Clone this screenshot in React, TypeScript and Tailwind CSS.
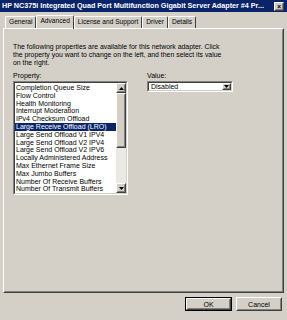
const items = [
  "Completion Queue Size",
  "Flow Control",
  "Health Monitoring",
  "Interrupt Moderation",
  "IPv4 Checksum Offload",
  "Large Receive Offload (LRO)",
  "Large Send Offload V1 IPV4",
  "Large Send Offload V2 IPV4",
  "Large Send Offload V2 IPV6",
  "Locally Administered Address",
  "Max Ethernet Frame Size",
  "Max Jumbo Buffers",
  "Number Of Receive Buffers",
  "Number Of Transmit Buffers",
];

const tabs = ["General", "Advanced", "License and Support", "Driver", "Details"];

function Arrow({ up }: { up?: boolean }) {
  return (
    <svg width="5" height="3" viewBox="0 0 5 3">
      <path d={up ? "M2.5 0 L5 3 L0 3 Z" : "M0 0 L5 0 L2.5 3 Z"} fill="#000" />
    </svg>
  );
}

function RaisedBox({ className, children }: { className?: string; children?: React.ReactNode }) {
  return (
    <div className={`border border-t-white border-l-white border-r-[#404040] border-b-[#404040] bg-[#d4d0c8] ${className ?? ""}`}>
      <div className="flex h-full w-full items-center justify-center border border-t-[#d4d0c8] border-l-[#d4d0c8] border-r-[#808080] border-b-[#808080]">
        {children}
      </div>
    </div>
  );
}

export default function App() {
  return (
    <div className="relative h-[320px] w-[287px] overflow-hidden bg-[#d4d0c8] font-['Liberation_Sans',Arial,sans-serif] text-black">
      {/* title bar */}
      <div className="flex h-[12px] items-center justify-between bg-[#0a246a] pl-[2px] pr-[3px]">
        <span className="whitespace-nowrap text-[7.2px] font-bold leading-none text-white">
          HP NC375i Integrated Quad Port Multifunction Gigabit Server Adapter #4 Pr...
        </span>
        <RaisedBox className="h-[9px] w-[10px]">
          <span className="text-[7px] font-bold leading-none">×</span>
        </RaisedBox>
      </div>

      <div className="px-[3px]">
        {/* tabs */}
        <div className="mt-[3px] flex h-[13px] items-end pl-[2px]">
          {tabs.map((t) => {
            const active = t === "Advanced";
            return (
              <div
                key={t}
                className={`flex items-center whitespace-nowrap rounded-t-[2px] border border-b-0 border-t-white border-l-white border-r-[#404040] text-[6.6px] leading-none ${
                  active ? "relative z-10 -mb-px h-[14px] px-[3px] pb-[2px]" : "h-[12px] px-[3px]"
                }`}
              >
                {t}
              </div>
            );
          })}
        </div>

        {/* panel */}
        <div className="h-[265px] w-[281px] border border-t-white border-l-white border-r-[#404040] border-b-[#404040]">
          <div className="h-full w-full border border-transparent border-r-[#808080] border-b-[#808080] px-[8px] pt-[13px]">
            <p className="text-[6.9px] leading-[8px]">
              The following properties are available for this network adapter. Click
              <br />
              the property you want to change on the left, and then select its value
              <br />
              on the right.
            </p>

            <div className="mt-[5px] flex gap-[19px]">
              <div className="w-[115px]">
                <div className="text-[7px] leading-[8px]">Property:</div>
                <div className="mt-[1px] h-[114px] border border-t-[#808080] border-l-[#808080] border-r-white border-b-white">
                  <div className="flex h-full border border-t-[#404040] border-l-[#404040] border-r-[#d4d0c8] border-b-[#d4d0c8] bg-white">
                    <div className="flex-1 pt-[1px]">
                      {items.map((it) => {
                        const sel = it === "Large Receive Offload (LRO)";
                        return (
                          <div
                            key={it}
                            className={`h-[7.8px] whitespace-nowrap pl-[1px] text-[7px] leading-[7.8px] ${
                              sel ? "bg-[#0a246a] text-white" : ""
                            }`}
                          >
                            {it}
                          </div>
                        );
                      })}
                    </div>
                    <div className="flex w-[10px] flex-col bg-[#ebe9e4]">
                      <RaisedBox className="h-[10px] w-[10px]">
                        <Arrow up />
                      </RaisedBox>
                      <RaisedBox className="h-[55px] w-[10px]" />
                      <div className="flex-1" />
                      <RaisedBox className="h-[10px] w-[10px]">
                        <Arrow />
                      </RaisedBox>
                    </div>
                  </div>
                </div>
              </div>

              <div className="w-[86px]">
                <div className="text-[7px] leading-[8px]">Value:</div>
                <div className="mt-[1px] h-[11px] border border-t-[#808080] border-l-[#808080] border-r-white border-b-white">
                  <div className="flex h-full items-center border border-t-[#404040] border-l-[#404040] border-r-[#d4d0c8] border-b-[#d4d0c8] bg-white">
                    <span className="flex-1 pl-[2px] text-[7px] leading-none">Disabled</span>
                    <RaisedBox className="h-full w-[9px]">
                      <Arrow />
                    </RaisedBox>
                  </div>
                </div>
              </div>
            </div>
          </div>
        </div>

        {/* buttons */}
        <div className="mt-[4px] flex justify-end gap-[4px] pr-[2px]">
          <div className="h-[14px] w-[47px] border border-black">
            <RaisedBox className="h-full w-full">
              <span className="text-[7px] leading-none">OK</span>
            </RaisedBox>
          </div>
          <RaisedBox className="h-[14px] w-[46px]">
            <span className="text-[7px] leading-none">Cancel</span>
          </RaisedBox>
        </div>
      </div>
    </div>
  );
}
